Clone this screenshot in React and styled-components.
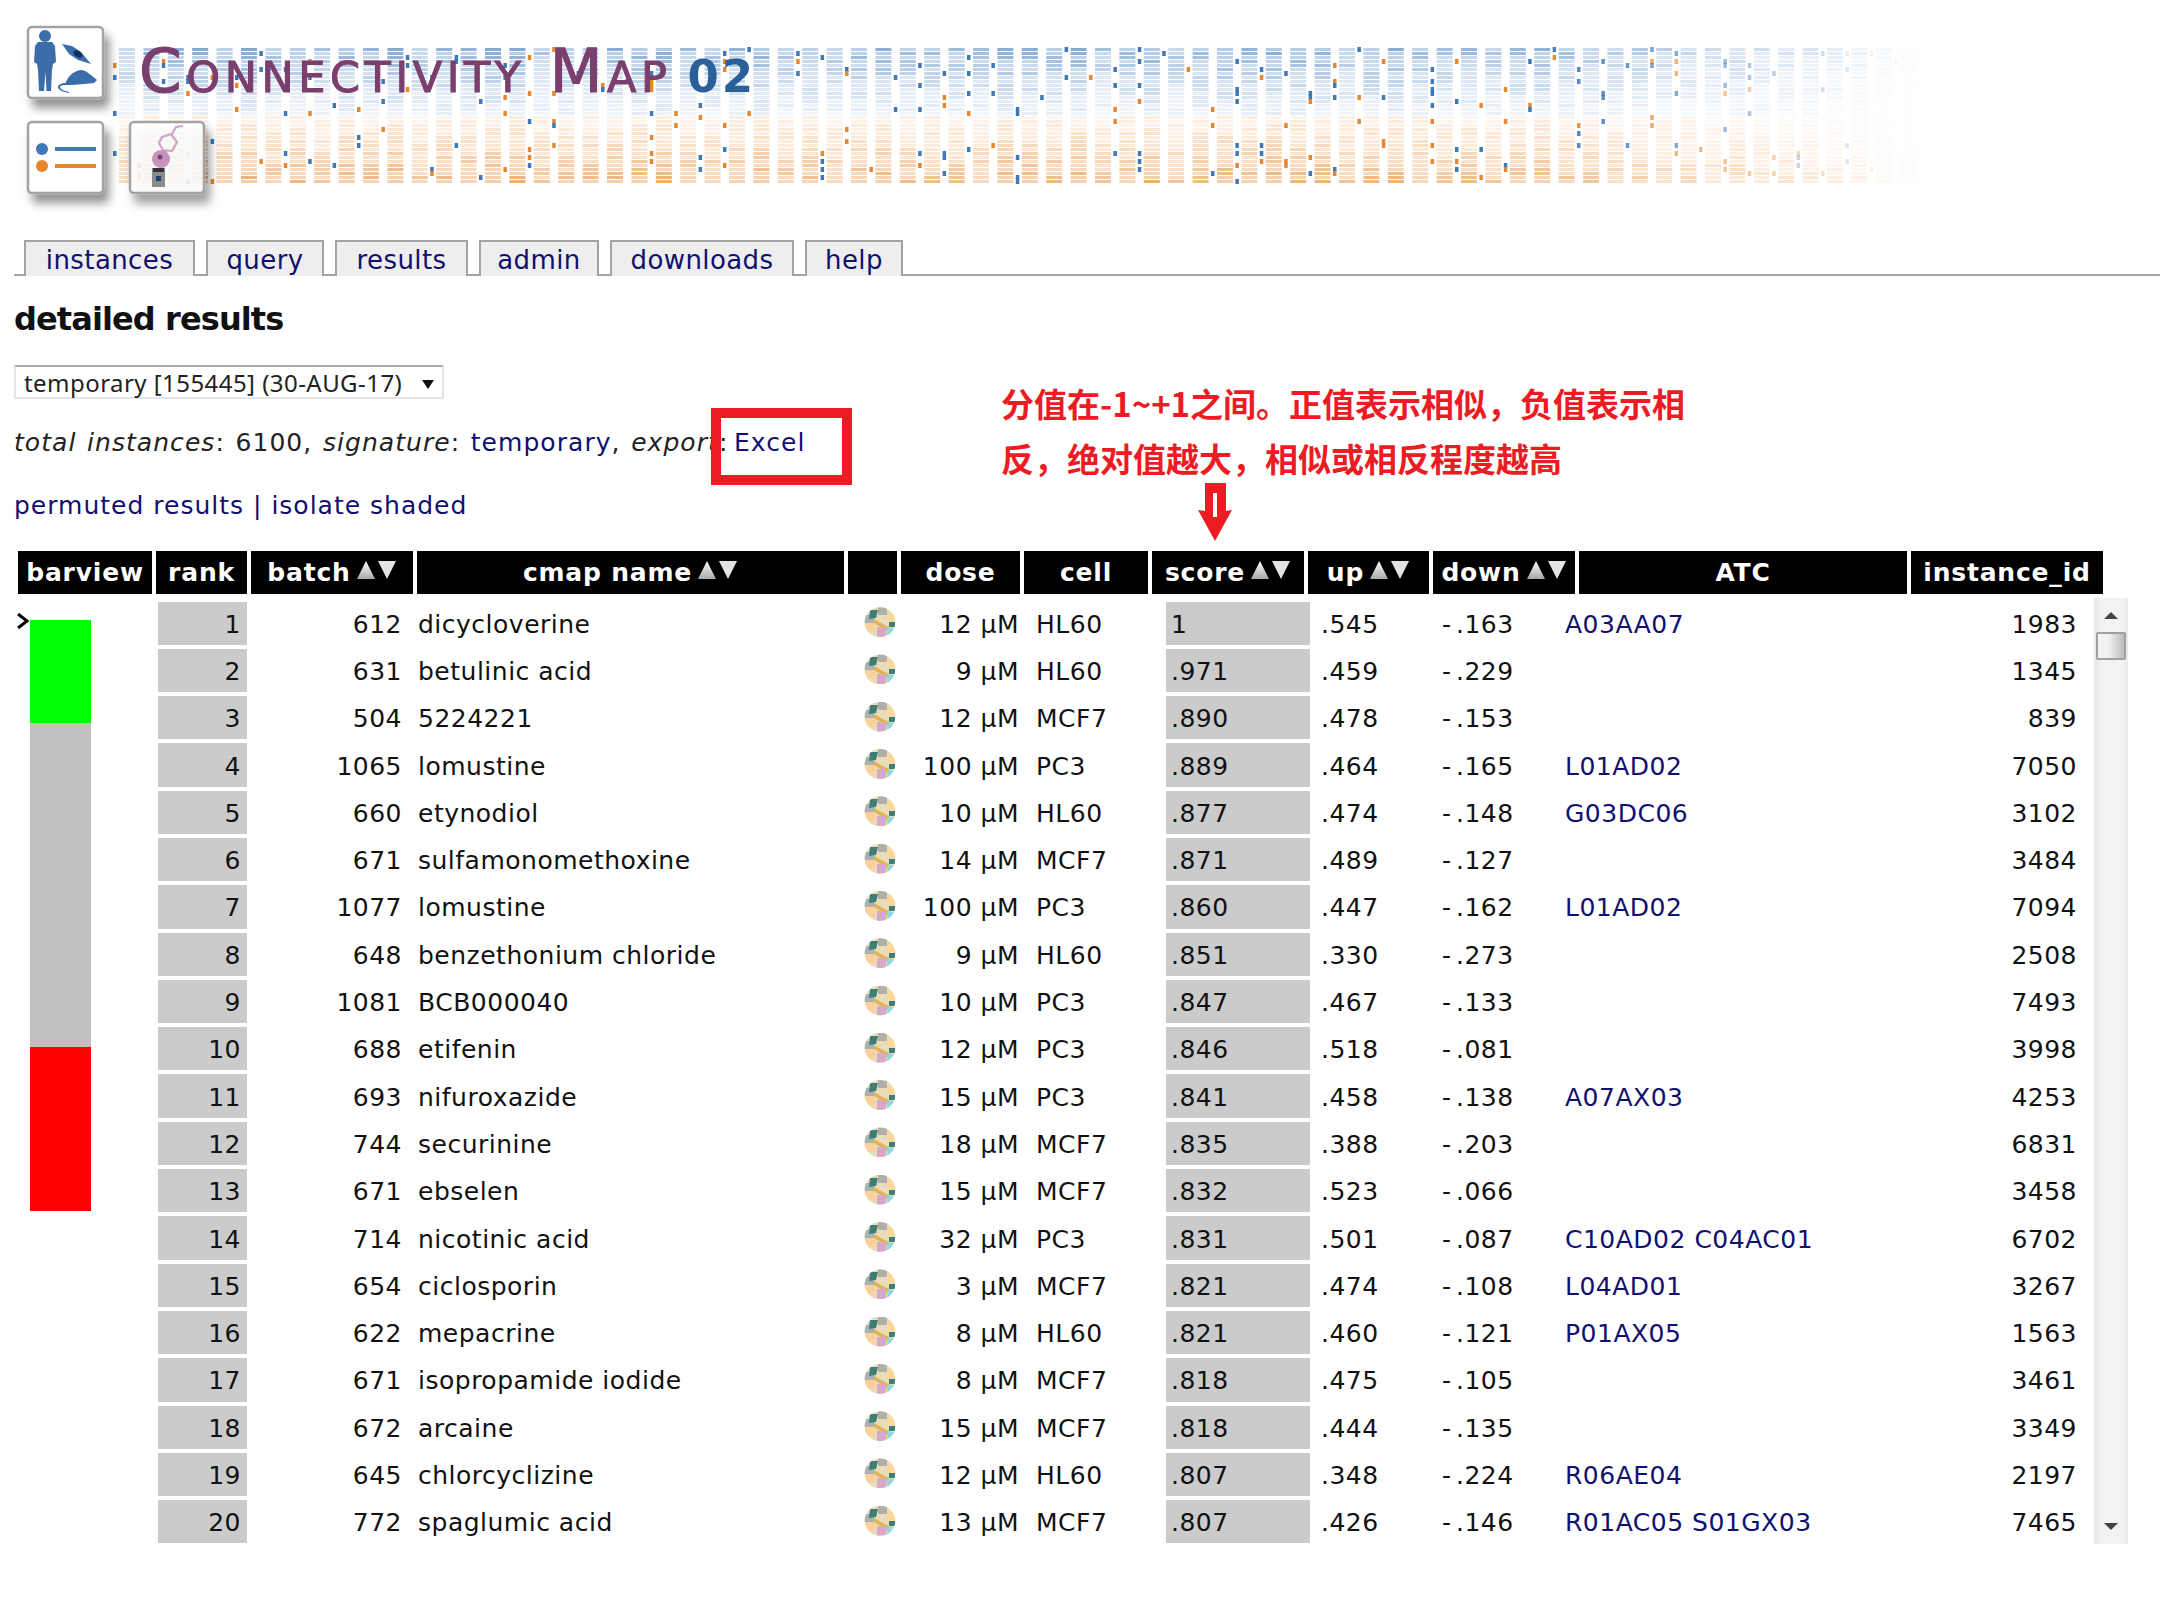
import styled, { createGlobalStyle } from "styled-components";

const GlobalStyle = createGlobalStyle`
  html, body {
    margin: 0;
    background: #fff;
    color: #111;
    font-family: "DejaVu Sans", Verdana, sans-serif;
  }
`;

const rows = [
  [1, 612, "dicycloverine", 12, "HL60", "1", ".545", "-.163", "A03AA07", 1983],
  [2, 631, "betulinic acid", 9, "HL60", ".971", ".459", "-.229", "", 1345],
  [3, 504, "5224221", 12, "MCF7", ".890", ".478", "-.153", "", 839],
  [4, 1065, "lomustine", 100, "PC3", ".889", ".464", "-.165", "L01AD02", 7050],
  [5, 660, "etynodiol", 10, "HL60", ".877", ".474", "-.148", "G03DC06", 3102],
  [6, 671, "sulfamonomethoxine", 14, "MCF7", ".871", ".489", "-.127", "", 3484],
  [7, 1077, "lomustine", 100, "PC3", ".860", ".447", "-.162", "L01AD02", 7094],
  [8, 648, "benzethonium chloride", 9, "HL60", ".851", ".330", "-.273", "", 2508],
  [9, 1081, "BCB000040", 10, "PC3", ".847", ".467", "-.133", "", 7493],
  [10, 688, "etifenin", 12, "PC3", ".846", ".518", "-.081", "", 3998],
  [11, 693, "nifuroxazide", 15, "PC3", ".841", ".458", "-.138", "A07AX03", 4253],
  [12, 744, "securinine", 18, "MCF7", ".835", ".388", "-.203", "", 6831],
  [13, 671, "ebselen", 15, "MCF7", ".832", ".523", "-.066", "", 3458],
  [14, 714, "nicotinic acid", 32, "PC3", ".831", ".501", "-.087", "C10AD02 C04AC01", 6702],
  [15, 654, "ciclosporin", 3, "MCF7", ".821", ".474", "-.108", "L04AD01", 3267],
  [16, 622, "mepacrine", 8, "HL60", ".821", ".460", "-.121", "P01AX05", 1563],
  [17, 671, "isopropamide iodide", 8, "MCF7", ".818", ".475", "-.105", "", 3461],
  [18, 672, "arcaine", 15, "MCF7", ".818", ".444", "-.135", "", 3349],
  [19, 645, "chlorcyclizine", 12, "HL60", ".807", ".348", "-.224", "R06AE04", 2197],
  [20, 772, "spaglumic acid", 13, "MCF7", ".807", ".426", "-.146", "R01AC05 S01GX03", 7465],
];

const tabs = [
  ["instances", 171],
  ["query", 118],
  ["results", 133],
  ["admin", 120],
  ["downloads", 184],
  ["help", 98],
];

const headers = [
  ["barview", false],
  ["rank", false],
  ["batch", true],
  ["cmap name", true],
  ["", false],
  ["dose", false],
  ["cell", false],
  ["score", true],
  ["up", true],
  ["down", true],
  ["ATC", false],
  ["instance_id", false],
];

// little seeded generator so the banner stays the same on every load
function seeded(seed) {
  let s = seed;
  return () => {
    s = (s * 16807) % 2147483647;
    return s / 2147483647;
  };
}

function buildHeatmap() {
  const rand = seeded(4711);
  const cells = [];
  const marks = [];
  for (let c = 0; c < 74; c++) {
    const x = 119 + c * 24.4;
    const fade = x < 1540 ? 1 : Math.max(0, 1 - (x - 1540) / 380);
    const colTone = 0.8 + rand() * 0.35;
    for (let r = 0; r < 34; r++) {
      const y = 48 + r * 4;
      const blue = r < 17;
      const depth = blue ? 1 - r / 17 : (r - 16) / 18;
      const stripe = rand() < 0.4 ? 1.45 : 0.9;
      const opacity = Math.min(1, (0.12 + Math.pow(depth, 1.4) * 0.46) * stripe * colTone) * fade;
      cells.push({ x, y, blue, opacity });
    }
    for (let r = 0; r < 34; r += 1) {
      const y = 47 + r * 4;
      const chance = r < 17 ? 0.12 : r < 24 ? 0.06 : 0.14;
      if (rand() < chance) {
        marks.push({
          x: x - 6,
          y,
          color: rand() < (r < 17 ? 0.62 : 0.5) ? "#3f78b8" : "#e8862e",
          opacity: fade,
        });
      }
    }
  }
  return { cells, marks };
}

const heatmap = buildHeatmap();

function BannerArt() {
  return (
    <BannerSvg viewBox="0 0 2160 240">
      <defs>
        <filter id="cardShadow" x="-30%" y="-30%" width="170%" height="170%">
          <feDropShadow dx="5" dy="9" stdDeviation="5" floodColor="#000" floodOpacity="0.42" />
        </filter>
      </defs>
      {heatmap.cells.map((cell, i) => (
        <rect
          key={i}
          x={cell.x}
          y={cell.y}
          width="16"
          height="3"
          fill={cell.blue ? "#7ea6d1" : "#eba764"}
          opacity={cell.opacity}
        />
      ))}
      {heatmap.marks.map((mark, i) => (
        <rect key={i} x={mark.x} y={mark.y} width="3.5" height="5" fill={mark.color} opacity={mark.opacity} />
      ))}

      <rect x="28" y="27" width="75" height="71" rx="4" fill="#fff" stroke="#a3a3a3" strokeWidth="2.5" filter="url(#cardShadow)" />
      <g fill="#3c6dab">
        <circle cx="45" cy="36" r="6" />
        <path d="M38 42 L52 42 L55 46 L56 62 L53 64 L52 70 L51 91 L46.5 91 L45.5 72 L44 91 L39 91 L38 70 L37 64 L34 62 L35 46 Z" />
        <path d="M62 44 L72 46 L81 52 L91 64 L78 60 L69 54 Z" />
        <path d="M65 85 C67 77 73 71 81 70 C85 70 88 73 91 75 L97 80 L94 83 C88 84 80 84 72 85 Z" />
        <path d="M66 83 C61 83 58 85 58 87 C58 90 63 92 69 93 L69 92 C64 91 60 89 60 87 C61 85 63 85 67 85 Z" />
      </g>
      <ellipse cx="78" cy="54" rx="5" ry="3" fill="#12305e" transform="rotate(32 78 54)" />

      <rect x="28" y="122" width="75" height="71" rx="4" fill="#fff" stroke="#a3a3a3" strokeWidth="2.5" filter="url(#cardShadow)" />
      <circle cx="42" cy="149" r="6" fill="#3f78b8" />
      <rect x="55" y="147" width="41" height="4" fill="#3f78b8" />
      <circle cx="42" cy="166" r="6" fill="#e8862e" />
      <rect x="55" y="164" width="41" height="4" fill="#e8862e" />

      <rect x="130" y="122" width="74" height="71" rx="4" fill="#fff" fillOpacity="0.86" stroke="#a3a3a3" strokeWidth="2.5" filter="url(#cardShadow)" />
      <g fill="none" stroke="#d0a4c6" strokeWidth="2.2">
        <polygon points="162,137 171,134 177,142 172,151 163,150 159,143" />
        <path d="M172 134 L176 127 L183 126" />
        <path d="M166 151 L165 155" />
      </g>
      <circle cx="161" cy="159" r="9" fill="#c792bb" />
      <circle cx="160" cy="157" r="2.5" fill="#7e4076" />
      <rect x="152" y="168" width="13" height="19" fill="#8a8b8d" />
      <rect x="153" y="168" width="11" height="4" fill="#333335" />
      <rect x="156" y="176" width="5" height="5" fill="#1c3f72" />
    </BannerSvg>
  );
}

function SortArrows() {
  return (
    <SortSvg viewBox="0 0 40 18">
      <defs>
        <linearGradient id="sortUp" x1="0" y1="0" x2="0" y2="1">
          <stop offset="0" stopColor="#fff" />
          <stop offset="1" stopColor="#a8a8a8" />
        </linearGradient>
      </defs>
      <polygon points="9,0 18,18 0,18" fill="url(#sortUp)" />
      <polygon points="21,0 39,0 30,18" fill="#e4e4e4" />
    </SortSvg>
  );
}

function CompoundIcon() {
  return (
    <IconSvg viewBox="0 0 32 30">
      <rect width="32" height="30" fill="#e9dcb8" />
      <rect x="0" y="8" width="10" height="12" fill="#a9b1b1" />
      <polygon points="6,3 14,3 12,11 5,12" fill="#3f7d77" />
      <rect x="14" y="0" width="9" height="8" fill="#b0b0a8" />
      <polygon points="10,12 28,22 26,26 10,16" fill="#e2b458" />
      <rect x="24" y="5" width="8" height="9" fill="#fbd89a" />
      <rect x="0" y="16" width="11" height="9" fill="#fbd09a" />
      <rect x="13" y="20" width="9" height="10" fill="#d8a8c8" />
      <rect x="23" y="21" width="7" height="7" fill="#8fd8e0" />
      <rect x="25" y="15" width="6" height="5" fill="#3f7d77" />
    </IconSvg>
  );
}

function App() {
  return (
    <Page>
      <GlobalStyle />
      <Banner>
        <BannerArt />
        <Title>
          Connectivity Map<TitleNumber>02</TitleNumber>
        </Title>
      </Banner>

      <TabBar>
        {tabs.map(([label, width]) => (
          <Tab key={label} $width={width}>
            {label}
          </Tab>
        ))}
      </TabBar>

      <Content>
        <Heading>detailed results</Heading>
        <Select>
          <span>temporary [155445] (30-AUG-17)</span>
          <SelectCaret />
        </Select>
        <InfoLine>
          <em>total instances</em>: 6100, <em>signature</em>: <Link>temporary</Link>, <em>export</em>: <ExcelLink>Excel</ExcelLink>
        </InfoLine>
        <LinksLine>
          <Link>permuted results</Link> | <Link>isolate shaded</Link>
        </LinksLine>
      </Content>

      <HeaderRow>
        {headers.map(([label, sortable], i) => (
          <HeaderCell key={i}>
            {label}
            {sortable && <SortArrows />}
          </HeaderCell>
        ))}
      </HeaderRow>

      <TableBody>
        <BarView>
          <Chevron viewBox="0 0 14 16">
            <path d="M2 1 L11 8 L2 15" fill="none" stroke="#000" strokeWidth="3" />
          </Chevron>
          <Bar $color="#00ff00" $height={103} />
          <Bar $color="#c0c0c0" $height={324} />
          <Bar $color="#ff0000" $height={164} />
        </BarView>

        <Rows>
          {rows.map((row) => (
            <Row key={row[0]}>
              <RankCell>{row[0]}</RankCell>
              <BatchCell>{row[1]}</BatchCell>
              <NameCell>{row[2]}</NameCell>
              <IconCell>
                <CompoundIcon />
              </IconCell>
              <DoseCell>{row[3]} µM</DoseCell>
              <CellLine>{row[4]}</CellLine>
              <ScoreCell>{row[5]}</ScoreCell>
              <UpCell>{row[6]}</UpCell>
              <DownCell>{row[7].replace("-", "- ")}</DownCell>
              <AtcCell>{row[8]}</AtcCell>
              <IdCell>{row[9]}</IdCell>
            </Row>
          ))}
        </Rows>

        <Scrollbar>
          <ScrollArrow />
          <ScrollThumb />
          <ScrollTrack />
          <ScrollArrow $down />
        </Scrollbar>
      </TableBody>

      <RedBox />
      <Annotation>分值在-1~+1之间。正值表示相似，负值表示相反，绝对值越大，相似或相反程度越高</Annotation>
      <RedArrow viewBox="0 0 36 58">
        <path d="M8 0 H29 V28 L35 27 L18 58 L1 27 L8 28 Z" fill="#ed1c24" />
        <path d="M16 10 H20 V34 H16 Z" fill="#fff" />
      </RedArrow>
    </Page>
  );
}

const Page = styled.div`
  position: relative;
  width: 2160px;
  height: 1620px;
  overflow: hidden;
  font-size: 25px;
`;

const Banner = styled.div`
  position: relative;
  height: 240px;
`;

const BannerSvg = styled.svg`
  display: block;
  width: 2160px;
  height: 240px;
  filter: blur(0.5px);
`;

const Title = styled.div`
  position: absolute;
  left: 139px;
  top: 31px;
  font-family: "DejaVu Sans", sans-serif;
  font-variant: small-caps;
  font-weight: 400;
  font-size: 61px;
  line-height: 80px;
  letter-spacing: 4.6px;
  -webkit-text-stroke: 1.1px #7b3f6e;
  color: #7b3f6e;
  white-space: nowrap;
  filter: blur(0.4px);
`;

const TitleNumber = styled.span`
  margin-left: 16px;
  color: #2a6099;
  font-size: 45px;
  font-weight: 700;
  letter-spacing: 3px;
  -webkit-text-stroke: 0;
`;

const TabBar = styled.div`
  display: flex;
  gap: 11px;
  height: 34px;
  margin-left: 14px;
  padding-left: 10px;
  border-bottom: 2px solid #a3a3a3;
`;

const Tab = styled.div`
  box-sizing: border-box;
  width: ${(p) => p.$width}px;
  height: 36px;
  text-align: center;
  line-height: 36px;
  font-size: 26px;
  letter-spacing: 0.4px;
  color: #101070;
  background: #eeeeee;
  border: 2px solid #a3a3a3;
  border-bottom: none;
`;

const Content = styled.div`
  padding-left: 14px;
`;

const Heading = styled.h1`
  margin: 22px 0 0;
  font-size: 32px;
  line-height: 42px;
  font-weight: 700;
  letter-spacing: -0.9px;
  color: #111;
`;

const Select = styled.div`
  box-sizing: border-box;
  display: flex;
  align-items: center;
  justify-content: space-between;
  width: 430px;
  height: 34px;
  margin-top: 25px;
  padding: 0 8px;
  font-family: "Noto Sans", sans-serif;
  font-size: 24px;
  letter-spacing: 0.45px;
  color: #222;
  border: 2px solid #e2e5ea;
  border-top-color: #a8a8a8;
  border-radius: 2px;
`;

const SelectCaret = styled.i`
  width: 0;
  height: 0;
  margin-top: 4px;
  border-left: 6px solid transparent;
  border-right: 6px solid transparent;
  border-top: 9px solid #111;
`;

const InfoLine = styled.div`
  margin-top: 27px;
  line-height: 34px;
  letter-spacing: 1.05px;
  word-spacing: 1.6px;
  color: #222;
  white-space: nowrap;
`;

const LinksLine = styled.div`
  margin-top: 29px;
  line-height: 34px;
  letter-spacing: 1px;
  color: #101070;
`;

const Link = styled.span`
  color: #101070;
`;

const ExcelLink = styled(Link)`
  margin-left: -5px;
`;

const HeaderRow = styled.div`
  display: grid;
  grid-template-columns: 134px 91px 162px 427px 49px 119px 124px 152px 121px 142px 328px 192px;
  gap: 4px;
  margin-top: 28px;
  padding-left: 18px;
`;

const HeaderCell = styled.div`
  display: flex;
  align-items: center;
  justify-content: center;
  gap: 6px;
  height: 43px;
  background: #000;
  color: #fff;
  font-weight: 700;
  font-size: 25px;
  letter-spacing: 0.8px;
  white-space: nowrap;
`;

const SortSvg = styled.svg`
  width: 40px;
  height: 18px;
  margin-top: -6px;
`;

const TableBody = styled.div`
  display: flex;
  margin-top: 4px;
`;

const BarView = styled.div`
  position: relative;
  display: flex;
  flex-direction: column;
  width: 158px;
  padding: 22px 0 0 30px;
  box-sizing: border-box;
`;

const Bar = styled.div`
  width: 61px;
  height: ${(p) => p.$height}px;
  background: ${(p) => p.$color};
`;

const Chevron = styled.svg`
  position: absolute;
  left: 16px;
  top: 15px;
  width: 14px;
  height: 16px;
`;

const Rows = styled.div`
  display: flex;
  flex-direction: column;
  gap: 4px;
  padding-top: 3.5px;
`;

const Row = styled.div`
  display: grid;
  grid-template-columns: 89px 161px 456px 32px 123px 147px 144px 119px 136px 400px 112px;
  height: 43.3px;
  align-items: center;
  letter-spacing: 0.5px;
  white-space: nowrap;

  & > * {
    box-sizing: border-box;
    padding-top: 2px;
  }
`;

const RankCell = styled.div`
  align-self: stretch;
  display: flex;
  align-items: center;
  justify-content: flex-end;
  padding-right: 6px;
  background: #cbcbcb;
`;

const BatchCell = styled.div`
  text-align: right;
  padding-right: 6px;
`;

const NameCell = styled.div`
  padding-left: 10px;
`;

const IconCell = styled.div`
  display: flex;
  margin-top: -4px;
`;

const IconSvg = styled.svg`
  width: 32px;
  height: 30px;
  clip-path: ellipse(48% 50%);
  filter: blur(0.5px);
`;

const DoseCell = styled.div`
  text-align: right;
`;

const CellLine = styled.div`
  padding-left: 17px;
`;

const ScoreCell = styled.div`
  align-self: stretch;
  display: flex;
  align-items: center;
  padding-left: 5px;
  background: #cbcbcb;
`;

const UpCell = styled.div`
  padding-left: 11px;
`;

const DownCell = styled.div`
  padding-left: 13px;
  word-spacing: -4px;
`;

const AtcCell = styled.div`
  color: #101070;
`;

const IdCell = styled.div`
  text-align: right;
`;

const Scrollbar = styled.div`
  display: flex;
  flex-direction: column;
  align-items: center;
  width: 34px;
  height: 946px;
  margin-left: 17px;
  background: linear-gradient(90deg, #e6e6e6, #f2f2f2 20%, #f2f2f2 85%, #e8e8e8);
`;

const ScrollArrow = styled.i`
  flex: none;
  width: 0;
  height: 0;
  margin: ${(p) => (p.$down ? "0 0 14px" : "14px 0 13px")};
  border-left: 7px solid transparent;
  border-right: 7px solid transparent;
  ${(p) => (p.$down ? "border-top: 7px solid #444;" : "border-bottom: 7px solid #444;")}
`;

const ScrollThumb = styled.div`
  flex: none;
  box-sizing: border-box;
  width: 30px;
  height: 28px;
  border: 2px solid #a0a0a0;
  border-radius: 2px;
  background: linear-gradient(90deg, #f4f4f4, #f0f0f0 40%, #bcbcbc);
`;

const ScrollTrack = styled.div`
  flex: 1;
`;

const RedBox = styled.div`
  position: absolute;
  left: 711px;
  top: 408px;
  box-sizing: border-box;
  width: 141px;
  height: 77px;
  border: 10px solid #ed1c24;
`;

const Annotation = styled.div`
  position: absolute;
  left: 1001px;
  top: 376px;
  width: 700px;
  font-family: "Noto Sans CJK SC", "Liberation Sans", sans-serif;
  font-size: 33px;
  font-weight: 700;
  line-height: 55px;
  color: #ed1c24;
`;

const RedArrow = styled.svg`
  position: absolute;
  left: 1197px;
  top: 483px;
  width: 36px;
  height: 58px;
`;

export default App;
